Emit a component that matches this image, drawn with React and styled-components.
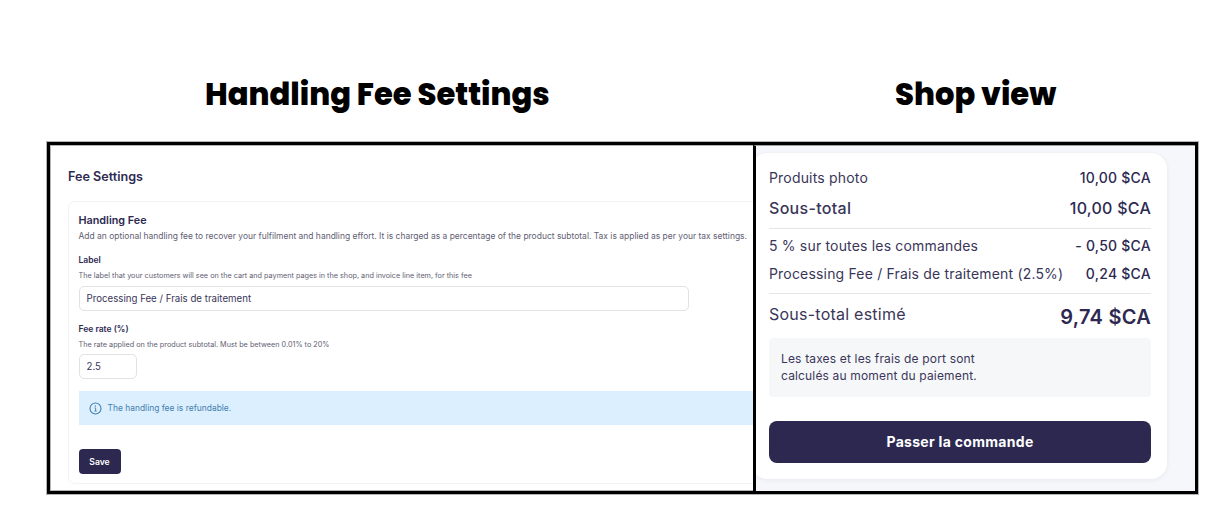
import React, { useState } from "react";
import styled, { createGlobalStyle } from "styled-components";

const GlobalStyle = createGlobalStyle`
    *{
        box-sizing:border-box;
    }
    body{
        margin:0;
        background-color:#fff;
        font-family:"Inter", "Liberation Sans", sans-serif;
        color:#2d2951;
    }
`;

const Page = styled.div`
    width:1216px;
    height:514px;
    overflow:hidden;
`;

const Titles = styled.div`
    display:grid;
    grid-template-columns:690px auto;
    height:142px;
    padding:71px 0 0 205px;
`;

const Title = styled.h1`
    margin:0;
    font-family:"Poppins", "Inter", sans-serif;
    font-size:30.6px;
    line-height:48px;
    font-weight:800;
    color:#000;
    white-space:nowrap;
`;

const Frame = styled.div`
    display:flex;
    width:1151px;
    height:352px;
    margin-left:47px;
    border:3px solid #000;
    box-shadow:0 0 0 1px #b4b4b4, inset 0 0 0 1px #b4b4b4;
`;

const SettingsPanel = styled.div`
    width:703px;
    padding:23px 0 0 18px;
    overflow:hidden;
    white-space:nowrap;
`;

const ShopPanel = styled.div`
    flex:1;
    padding-top:7px;
    border-top:1px solid #a0a0a0;
    border-left:3px solid #000;
    background-color:#f6f7fa;
    overflow:hidden;
`;

const PanelTitle = styled.h2`
    margin:0;
    font-size:12.6px;
    line-height:18px;
    font-weight:600;
`;

const SettingsCard = styled.form`
    display:flex;
    flex-direction:column;
    align-items:flex-start;
    height:283px;
    margin-top:15px;
    padding:11px 0 0 9.5px;
    border:1px solid #f3f3f5;
    border-right:none;
    border-radius:7px 0 0 7px;
`;

const CardTitle = styled.h3`
    margin:0;
    font-size:10.8px;
    line-height:16px;
    font-weight:600;
`;

const CardDescription = styled.p`
    margin:1px 0 0;
    font-size:8.47px;
    line-height:12px;
    color:#626073;
`;

const Label = styled.label`
    margin-top:${props => props.$top};
    font-size:8.5px;
    line-height:12px;
    font-weight:600;
`;

const Hint = styled.p`
    margin:4px 0 ${props => props.$bottom};
    font-size:7.25px;
    line-height:12px;
    color:#626073;
`;

const Input = styled.input`
    width:${props => props.$width};
    height:25px;
    padding:0 7px;
    border:1px solid #e2e2e6;
    border-radius:5px;
    outline:none;
    background-color:#fff;
    font-family:inherit;
    font-size:9.7px;
    color:#3a3659;
`;

const Banner = styled.div`
    display:flex;
    align-items:center;
    align-self:stretch;
    gap:6px;
    height:34px;
    margin-top:12px;
    padding-left:10px;
    background-color:#dceffe;
    font-size:8.45px;
    color:#4480ae;
`;

const SaveButton = styled.button`
    width:42px;
    height:25px;
    margin-top:24px;
    padding:0;
    border:none;
    border-radius:4px;
    background-color:#2c2850;
    font-family:inherit;
    font-size:8.6px;
    font-weight:600;
    color:#fff;
`;

const CartCard = styled.div`
    width:416px;
    height:326px;
    margin-left:-5px;
    padding:11px 16px 0 18px;
    border-radius:16px;
    background-color:#fff;
    box-shadow:0 1px 5px rgba(44,40,80,0.07);
`;

const Row = styled.div`
    display:flex;
    justify-content:space-between;
    height:${props => props.$height};
    line-height:28px;
    white-space:nowrap;
`;

const RowLabel = styled.span`
    font-size:${props => props.$size || '14px'};
    font-weight:${props => props.$weight || 400};
    letter-spacing:${props => props.$spacing || '0.18px'};
    color:#3a3659;
`;

const Amount = styled.span`
    padding-top:${props => props.$top || '0'};
    font-size:${props => props.$size || '14px'};
    font-weight:${props => props.$weight || 500};
    letter-spacing:0.25px;
`;

const Divider = styled.hr`
    height:1px;
    margin:${props => props.$margin};
    border:none;
    background-color:#e6e6ea;
`;

const Note = styled.p`
    width:382px;
    height:59px;
    margin:6px 0 0;
    padding:13px 12px;
    border-radius:4px;
    background-color:#f6f7f9;
    font-size:12px;
    line-height:16.5px;
    letter-spacing:0.16px;
    color:#3a3659;
`;

const CheckoutButton = styled.button`
    width:382px;
    height:42px;
    margin-top:24px;
    padding:0 0 2px;
    border:none;
    border-radius:8px;
    background-color:#2c2850;
    font-family:inherit;
    font-size:14px;
    font-weight:700;
    letter-spacing:0.3px;
    color:#fff;
`;

function InfoIcon(){
    return (
        <svg width="13" height="13" viewBox="0 0 13 13" fill="none" stroke="#4480ae">
            <circle cx="6.5" cy="6.5" r="5.5" strokeWidth="1.1" />
            <path d="M5.6 5.9H6.6V9M5.5 9.1H7.6" strokeWidth="0.9" />
            <circle cx="6.4" cy="4" r="0.65" fill="#4480ae" stroke="none" />
        </svg>
    )
}

function FeeSettings(){
    const [label, setLabel] = useState('Processing Fee / Frais de traitement');
    const [rate, setRate] = useState('2.5');

    return (
        <SettingsPanel>
            <PanelTitle>Fee Settings</PanelTitle>
            <SettingsCard onSubmit={(ev)=>ev.preventDefault()}>
                <CardTitle>Handling Fee</CardTitle>
                <CardDescription>Add an optional handling fee to recover your fulfilment and handling effort. It is charged as a percentage of the product subtotal. Tax is applied as per your tax settings.</CardDescription>
                <Label htmlFor="label" $top="12px">Label</Label>
                <Hint $bottom="4px">The label that your customers will see on the cart and payment pages in the shop, and invoice line item, for this fee</Hint>
                <Input id="label" $width="610px" value={label} onChange={(ev)=>setLabel(ev.target.value)} />
                <Label htmlFor="rate" $top="12px">Fee rate (%)</Label>
                <Hint $bottom="3px">The rate applied on the product subtotal. Must be between 0.01% to 20%</Hint>
                <Input id="rate" $width="58px" value={rate} onChange={(ev)=>setRate(ev.target.value)} />
                <Banner>
                    <InfoIcon />
                    <span>The handling fee is refundable.</span>
                </Banner>
                <SaveButton type="submit">Save</SaveButton>
            </SettingsCard>
        </SettingsPanel>
    )
}

function ShopView(){
    return (
        <ShopPanel>
            <CartCard>
                <Row $height="30px">
                    <RowLabel>Produits photo</RowLabel>
                    <Amount>10,00 $CA</Amount>
                </Row>
                <Row $height="28px">
                    <RowLabel $size="16px" $weight={500} $spacing="0.3px">Sous-total</RowLabel>
                    <Amount $size="16px">10,00 $CA</Amount>
                </Row>
                <Divider $margin="6px 0 3px" />
                <Row $height="28px">
                    <RowLabel>5 % sur toutes les commandes</RowLabel>
                    <Amount>- 0,50 $CA</Amount>
                </Row>
                <Row $height="28px">
                    <RowLabel>Processing Fee / Frais de traitement (2.5%)</RowLabel>
                    <Amount>0,24 $CA</Amount>
                </Row>
                <Divider $margin="5px 0 6px" />
                <Row $height="32px">
                    <RowLabel $size="16px" $spacing="0.24px">Sous-total estimé</RowLabel>
                    <Amount $size="20px" $weight={600} $top="3px">9,74 $CA</Amount>
                </Row>
                <Note>Les taxes et les frais de port sont<br />calculés au moment du paiement.</Note>
                <CheckoutButton>Passer la commande</CheckoutButton>
            </CartCard>
        </ShopPanel>
    )
}

export default function App(){
    return (
        <Page>
            <GlobalStyle />
            <Titles>
                <Title>Handling Fee Settings</Title>
                <Title>Shop view</Title>
            </Titles>
            <Frame>
                <FeeSettings />
                <ShopView />
            </Frame>
        </Page>
    )
}
